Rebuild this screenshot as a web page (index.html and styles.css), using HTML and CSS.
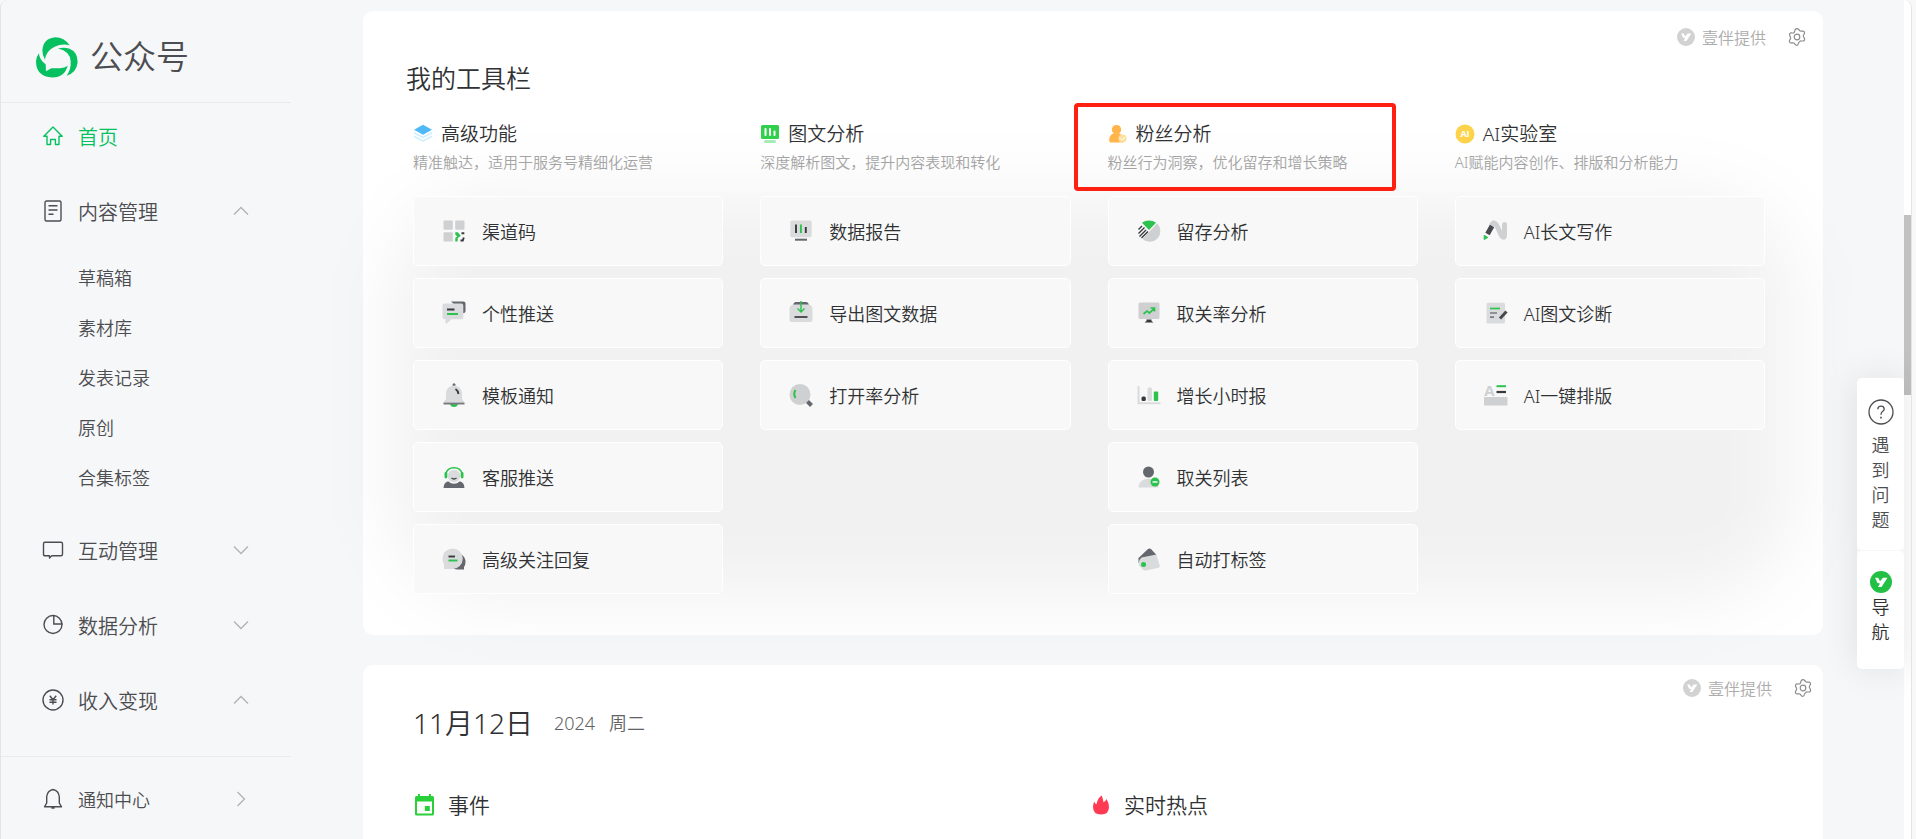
FILE: index.html
```html
<!DOCTYPE html>
<html lang="zh-CN">
<head>
<meta charset="utf-8">
<meta name="viewport" content="width=device-width, initial-scale=1">
<title>公众号</title>
<link rel="stylesheet" href="styles.css">
</head>
<body>
<svg class="sprite" aria-hidden="true">
  <symbol id="chevron" viewBox="0 0 16 16"><path d="M1 4.500l7 7 7-7" fill="none" stroke="#b2b2b2" stroke-width="1.300"/></symbol>
  <symbol id="gear" viewBox="0 0 18 18"><path d="M9 .7q1 0 1.700.8l1.200 1.400q.5.4 1.200.3l1.700-.1q1 0 1.500.9t0 1.800l-.8 1.500q-.4.7 0 1.400l.9 1.600q.5.9 0 1.800t-1.500.9l-1.800-.1q-.7-.1-1.200.4l-1.200 1.400Q10 17.400 9 17.400t-1.700-.8L6.100 15.200q-.5-.5-1.200-.4l-1.800.1q-1 0-1.500-.9t0-1.800l.9-1.600q.4-.7 0-1.400l-.8-1.600q-.5-.9 0-1.800t1.500-.9l1.700.1q.7.1 1.200-.3L7.300 1.500Q8 .7 9 .7z" fill="none" stroke="#8c8c8c" stroke-width="1.200"/><circle cx="9" cy="9" r="2.800" fill="none" stroke="#8c8c8c" stroke-width="1.200"/></symbol>
  <symbol id="yiban" viewBox="0 0 22 22"><circle cx="11" cy="11" r="11" fill="currentColor"/><path d="M5 6.800H8.200L10 10.300L13 6.800H17.500L11.500 16H8L10 12.500L7.500 12z" fill="#fff"/></symbol>
</svg>

<div class="frame">
  <aside class="sidebar">
    <div class="brand">
      <svg width="42" height="41" viewBox="108 113 126 122" fill="#07c160" aria-hidden="true">
        <path d="M135 181Q127 167 127 152Q130 116 166 113Q192 113 209 137Q184 132 164 142Q138 154 135 181z"/>
        <path d="M174 147Q191 142 207 147Q233 157 233 188Q230 218 200 229Q214 208 212 185Q210 155 174 147z"/>
        <path d="M117 161Q117 179 137 194L138 215L154 206H180Q195 206 203 199Q194 234 157 234Q108 231 108 185Q109 171 117 161z"/>
      </svg>
      <span>公众号</span>
    </div>
    <nav class="nav">
      <a class="nav-item active" href="#">
        <svg width="22" height="22" viewBox="0 0 22 22" fill="none" stroke="currentColor" stroke-width="1.400" stroke-linejoin="round"><path d="M11 2L1.800 11.200H5V19.500H8.600V14.500H13.400V19.500H17V11.200H20.200z"/></svg>
        <span>首页</span>
      </a>
      <button class="nav-item" type="button" aria-expanded="true">
        <svg width="22" height="22" viewBox="0 0 22 22" fill="none" stroke="currentColor" stroke-width="1.400"><rect x="3" y="1" width="16" height="20" rx="1.500"/><path d="M6.500 5.800h9M6.500 10h9M6.500 14.200h5"/></svg>
        <span>内容管理</span>
        <svg class="arrow up" width="16" height="16"><use href="#chevron"/></svg>
      </button>
      <ul class="nav-sub">
        <li><a href="#">草稿箱</a></li>
        <li><a href="#">素材库</a></li>
        <li><a href="#">发表记录</a></li>
        <li><a href="#">原创</a></li>
        <li><a href="#">合集标签</a></li>
      </ul>
      <button class="nav-item" type="button">
        <svg width="22" height="22" viewBox="0 0 22 22" fill="none" stroke="currentColor" stroke-width="1.400" stroke-linejoin="round"><path d="M3 3.200H19Q20.500 3.200 20.500 4.700V15.300Q20.500 16.800 19 16.800H9.800L7.500 19V16.800H3Q1.500 16.800 1.500 15.300V4.700Q1.500 3.200 3 3.200z"/></svg>
        <span>互动管理</span>
        <svg class="arrow" width="16" height="16"><use href="#chevron"/></svg>
      </button>
      <button class="nav-item" type="button">
        <svg width="22" height="22" viewBox="0 0 22 22" fill="none" stroke="currentColor" stroke-width="1.400"><circle cx="11" cy="10.500" r="9"/><path d="M11.800 1V10H20.500" /></svg>
        <span>数据分析</span>
        <svg class="arrow" width="16" height="16"><use href="#chevron"/></svg>
      </button>
      <button class="nav-item" type="button">
        <svg width="22" height="22" viewBox="0 0 22 22" fill="none" stroke="currentColor" stroke-width="1.400"><circle cx="11" cy="11" r="10"/><path d="M7.800 6.800l3.200 4 3.200-4M11 10.800v4.800M7.500 10.800h7M7.500 13.300h7"/></svg>
        <span>收入变现</span>
        <svg class="arrow up" width="16" height="16"><use href="#chevron"/></svg>
      </button>
    </nav>
    <a class="nav-item notice" href="#">
      <svg width="22" height="22" viewBox="0 0 22 22" fill="none" stroke="currentColor" stroke-width="1.400" stroke-linejoin="round"><path d="M2.500 18.800L4.700 15V8.500Q5.500 2.500 11 1.500Q16.500 2.500 17.300 8.500V15L19.500 18.800z"/><path d="M9.300 19.700h3.400" stroke-width="2"/></svg>
      <span>通知中心</span>
      <svg class="arrow right" width="16" height="16"><use href="#chevron"/></svg>
    </a>
  </aside>

  <main class="main">
    <section class="panel tools">
      <div class="provider">
        <svg class="badge" width="18" height="18"><use href="#yiban"/></svg>
        <span>壹伴提供</span>
        <button type="button" aria-label="设置"><svg width="18" height="18"><use href="#gear"/></svg></button>
      </div>
      <h2>我的工具栏</h2>
      <div class="groups">
        <section class="group">
          <header>
            <h3><svg width="20" height="20" viewBox="0 0 20 20"><path d="M1 11.500l9 4.500 9-4.500v1.800l-9 4.500-9-4.500zM1 8l9 4.500L19 8v1.800l-9 4.500-9-4.500z" fill="#cdeefd"/><path d="M10 .8l9 5-9 5-9-5z" fill="#4fb9f7"/></svg>高级功能</h3>
            <p>精准触达，适用于服务号精细化运营</p>
          </header>
          <a class="tool" href="#"><svg viewBox="0 0 24 24"><g fill="#cfd0d2"><rect x="1.500" y="1.500" width="9.300" height="9.300" rx="1"/><rect x="13.200" y="1.500" width="9.300" height="9.300" rx="1"/><rect x="1.500" y="13.200" width="9.300" height="9.300" rx="1"/></g><path d="M13.300 13.300h2.500l3 3.400-3 2.300-.2 3.500h-2.300v-3.500l2-1.800-2-1.500z" fill="#2bc24d"/><path d="M19.500 14.300h2.800M18.500 21.500h2.300l1-3" fill="none" stroke="#38393d" stroke-width="1.900"/></svg>渠道码</a>
          <a class="tool" href="#"><svg viewBox="0 0 24 24"><path d="M9 .5h12.500q2 0 2 2V10q0 1.800-2 2.200z" fill="#64676e"/><path d="M2.500 2.500h16.800q2 0 2 2v11.700q0 2-2 2H9.500L5 22.500H3.500V18.200h-1q-2 0-2-2V4.500q0-2 2-2z" fill="#dadbdd"/><path d="M5 8.500h7.500" stroke="#38393d" stroke-width="2"/><path d="M5 13h11" stroke="#2bc24d" stroke-width="2"/></svg>个性推送</a>
          <a class="tool" href="#"><svg viewBox="0 0 24 24"><path d="M8 20.500h8Q15.500 24 12 24T8 20.500z" fill="#2bc24d"/><circle cx="12" cy="1.800" r="1.500" fill="#64676e"/><path d="M1.800 19.200L4 16V10q.5-7 8-7.500 7.500.5 8 7.500v6l2.200 3.200z" fill="#dadbdd"/><path d="M1.500 20.500h21" stroke="#777a80" stroke-width="2"/><path d="M13.500 6Q16 7.500 16.500 11" stroke="#38393d" stroke-width="1.800" fill="none"/></svg>模板通知</a>
          <a class="tool" href="#"><svg viewBox="0 0 24 24"><path d="M1.500 23Q1.500 17 7.500 16h9Q22.500 17 22.500 23z" fill="#64676e"/><circle cx="12" cy="11" r="7" fill="#dadbdd" stroke="#f8f8f8" stroke-width="1.500"/><path d="M4 9Q5 2.800 12 2.800T20 9" fill="none" stroke="#2bc24d" stroke-width="1.400"/><rect x="2.500" y="7" width="2.800" height="6.500" rx="1.400" fill="#2bc24d"/><rect x="18.700" y="7" width="2.800" height="6.500" rx="1.400" fill="#2bc24d"/><path d="M9.500 13Q12 15 14.500 13" fill="none" stroke="#38393d" stroke-width="1.300"/></svg>客服推送</a>
          <a class="tool" href="#"><svg viewBox="0 0 24 24"><path d="M19 7q4.500 3 4.500 8 0 3-1.500 5v2.500h-6q-3 0-5-1.500z" fill="#64676e"/><path d="M10.500 1.500a10 10 0 1 1 0 20.500H2v-5Q.5 15 .5 11.500 1 2.500 10.500 1.500z" fill="#dadbdd"/><path d="M6.500 9.500h6.500" stroke="#38393d" stroke-width="1.900"/><path d="M6.500 13.500h9" stroke="#2bc24d" stroke-width="1.900"/></svg>高级关注回复</a>
        </section>

        <section class="group">
          <header>
            <h3><svg width="20" height="20" viewBox="0 0 20 20"><rect x="4" y="16" width="12" height="3" rx="1.500" fill="#a5ebb2"/><rect x="1" y="1" width="18" height="14" rx="1.500" fill="#31d04c"/><path d="M5.500 5v6M10 5v6M14.500 7.500V11" stroke="#fff" stroke-width="2" stroke-linecap="round"/></svg>图文分析</h3>
            <p>深度解析图文，提升内容表现和转化</p>
          </header>
          <a class="tool" href="#"><svg viewBox="0 0 24 24"><rect x="1.300" y="1.500" width="21.400" height="16.700" rx="1.800" fill="#dadbdd"/><path d="M7 5.500V14M16.800 8v6" stroke="#38393d" stroke-width="1.900"/><path d="M11.900 5.500V14" stroke="#2bc24d" stroke-width="1.900"/><path d="M6 20.700h12" stroke="#64676e" stroke-width="2"/></svg>数据报告</a>
          <a class="tool" href="#"><svg viewBox="0 0 24 24"><path d="M4 4.500Q4.500 1 7 1h10q2.500 0 3 3.500z" fill="#64676e"/><path d="M4 3.500h16q3.500 1 3.500 4V19q0 2-2 2h-19q-2 0-2-2V7.500q0-3 3.500-4z" fill="#dadbdd"/><path d="M12 0v10.500M8.500 7.500L12 11l3.500-3.500" fill="none" stroke="#2bc24d" stroke-width="1.400"/><path d="M5.500 16h13" stroke="#38393d" stroke-width="1.700"/></svg>导出图文数据</a>
          <a class="tool" href="#"><svg viewBox="0 0 24 24"><circle cx="11" cy="11.500" r="10.500" fill="#cfd0d2"/><path d="M18.500 18.500l4 4" stroke="#64676e" stroke-width="4"/><path d="M6.500 7q-2.500 4 0 8" fill="none" stroke="#2bc24d" stroke-width="2"/></svg>打开率分析</a>
        </section>

        <section class="group highlighted">
          <header>
            <h3><svg width="20" height="20" viewBox="0 0 20 20"><path d="M8.500 1a4.500 4.500 0 0 1 2.500 8.300Q16 11 15.500 18.500H3Q1 18.500 1.200 16 1.500 10.500 6 9.300A4.500 4.500 0 0 1 8.500 1z" fill="#ffb54a"/><circle cx="14.500" cy="14.500" r="4" fill="#fddf9f"/><path d="M12.500 14.300l1.600 1.600 2.600-2.600" fill="none" stroke="#fff" stroke-width="1"/></svg>粉丝分析</h3>
            <p>粉丝行为洞察，优化留存和增长策略</p>
          </header>
          <a class="tool" href="#"><svg viewBox="0 0 24 24"><path d="M20 4.500A10.500 10.500 0 0 1 5.500 20z" fill="#cfd0d2"/><path d="M12 11L5 3.800Q8 1.500 12 1.500t7 2.300z" fill="#2bc24d"/><path d="M1.500 10.500L5 7M1.500 14.500L7.500 8.500M2.500 17.500L9 11M4.500 19L11 12.500" stroke="#38393d" stroke-width="1.400"/></svg>留存分析</a>
          <a class="tool" href="#"><svg viewBox="0 0 24 24"><rect x="1.500" y="1.500" width="21" height="16.500" rx="1.500" fill="#cfd0d2"/><path d="M6.500 13l3.500-3 2.500 2 5-5M13.500 7h4v3.500" fill="none" stroke="#2bc24d" stroke-width="1.700"/><path d="M9.500 18.500h5v1.500l2 1.500h-9l2-1.500z" fill="#38393d"/></svg>取关率分析</a>
          <a class="tool" href="#"><svg viewBox="0 0 24 24"><path d="M1.500 3v17.200h22" fill="none" stroke="#dadbdd" stroke-width="2"/><rect x="10.500" y="4.500" width="4.500" height="13.500" rx="1.500" fill="#dadbdd"/><rect x="4.500" y="13.500" width="4.300" height="4.500" rx="1.500" fill="#38393d"/><rect x="16.800" y="8.500" width="4.400" height="9.500" rx="1" fill="#2bc24d"/></svg>增长小时报</a>
          <a class="tool" href="#"><svg viewBox="0 0 24 24"><path d="M1.500 22.500Q2 14 12 13.500q9.500.5 9.500 9z" fill="#dadbdd"/><circle cx="11.500" cy="7" r="5.500" fill="#64676e"/><circle cx="18" cy="17" r="4.500" fill="#2bc24d"/><path d="M15.500 17h5" stroke="#fff" stroke-width="1.400"/></svg>取关列表</a>
          <a class="tool" href="#"><svg viewBox="0 0 24 24"><path d="M1.500 16V11L11 2q1.500-1 3 0l5.500 6z" fill="#64676e"/><path d="M19.300 7.500L22.800 19q.2 1.300-1 1.800L9 23.500q-1.500.3-2.500-.6L2 18.500q-1-5 2.500-8z" fill="#dadbdd"/><circle cx="6.500" cy="17.500" r="2.500" fill="#2bc24d"/></svg>自动打标签</a>
        </section>

        <section class="group">
          <header>
            <h3><svg width="20" height="20" viewBox="0 0 20 20"><circle cx="10" cy="10" r="9.500" fill="#fdd34b"/><text x="10" y="13.200" text-anchor="middle" class="ai-mark">AI</text></svg>AI实验室</h3>
            <p>AI赋能内容创作、排版和分析能力</p>
          </header>
          <a class="tool" href="#"><svg viewBox="0 0 24 24"><path d="M8 5.500Q10 2 12.500 6l5 10.500q2.500 3.500 3 0V5.500" fill="none" stroke="#cfd0d2" stroke-width="5" stroke-linecap="round"/><path d="M8 7L3.500 15" stroke="#48494e" stroke-width="5"/><path d="M.2 16.300l3.600 2.200-3.600 2z" fill="#2bc24d" stroke="#2bc24d"/></svg>AI长文写作</a>
          <a class="tool" href="#"><svg viewBox="0 0 24 24"><rect x="2.500" y="1.800" width="18.500" height="20.700" rx="1.500" fill="#dadbdd"/><path d="M6 7.500h10" stroke="#2bc24d" stroke-width="1.700"/><path d="M6 12h7M6 16.200h4" stroke="#777a80" stroke-width="1.700"/><path d="M16 17.500l6.500-7" stroke="#48494e" stroke-width="3"/></svg>AI图文诊断</a>
          <a class="tool" href="#"><svg viewBox="0 0 24 24"><text x="5.500" y="12.500" text-anchor="middle" class="type-mark">A</text><rect y="14" width="23.500" height="8.500" rx=".8" fill="#cfd0d2"/><path d="M12.500 3.200h9.500" stroke="#2bc24d" stroke-width="2"/><path d="M12.500 9h9.500" stroke="#38393d" stroke-width="2.200"/></svg>AI一键排版</a>
        </section>
      </div>
    </section>

    <section class="panel daily">
      <div class="provider">
        <svg class="badge" width="18" height="18"><use href="#yiban"/></svg>
        <span>壹伴提供</span>
        <button type="button" aria-label="设置"><svg width="18" height="18"><use href="#gear"/></svg></button>
      </div>
      <div class="date"><strong>11月12日</strong><span>2024</span><span>周二</span></div>
      <div class="topics">
        <h3><svg width="24" height="24" viewBox="0 0 24 24"><path d="M2 4.500Q2 3 3.500 3H5V1h2v2h9V1h2v2h1.500Q21 3 21 4.500V21q0 1.500-1.500 1.500h-16Q2 22.500 2 21zM4 8.500v12h15v-12z" fill="#29d03a" fill-rule="evenodd"/><rect x="11.800" y="13" width="5" height="5" fill="#29d03a"/></svg>事件</h3>
        <h3><svg width="24" height="24" viewBox="0 0 24 24"><path d="M12.800 2.500Q14 6 14.500 9.200 16.500 8.500 17.500 6 20 10 20 14q0 7.500-8 7.500T4 14q0-3 1.300-5.500Q6 11 7.500 11.300 8.500 5 12.800 2.500z" fill="#ff3b53"/></svg>实时热点</h3>
      </div>
    </section>
  </main>

  <div class="scrollbar"><div class="thumb"></div></div>
  <div class="float">
    <button class="help" type="button">
      <svg width="26" height="26" viewBox="0 0 26 26" fill="none" stroke="#4c4d50" stroke-width="1.300"><circle cx="13" cy="13" r="12"/><path d="M9.800 10.300Q10 7.200 13 7.200t3.200 2.800Q16.200 11.500 14.500 12.500 13 13.500 13 15.800" /><path d="M13 17.800v1.700" stroke-width="1.600"/></svg>
      <span>遇到问题</span>
    </button>
    <button class="guide" type="button">
      <svg class="badge" width="22" height="22"><use href="#yiban"/></svg>
      <span>导航</span>
    </button>
  </div>
</div>
</body>
</html>
```

FILE: styles.css
```css
* { box-sizing: border-box; }

body {
  margin: 0;
  background: #f8f8f8;
  color: #303133;
  font-family: "Noto Sans", "Noto Sans CJK SC", sans-serif;
  font-size: 18px;
  font-weight: 350;
}

h2, h3, p, ul { margin: 0; padding: 0; font-weight: inherit; }
ul { list-style: none; }
a { color: inherit; text-decoration: none; }
button { margin: 0; padding: 0; border: 0; background: none; color: inherit; font: inherit; cursor: pointer; }
svg { flex: none; display: block; overflow: visible; }
.sprite { position: absolute; width: 0; height: 0; overflow: hidden; }

.frame {
  position: relative;
  display: flex;
  height: 100vh;
  margin: 0 4px 0 0;
  overflow: hidden;
  border: solid #e3e4e6;
  border-width: 0 1px;
  border-radius: 8px 8px 0 0;
  background: #f6f7f9;
}

/* Sidebar */
.sidebar { flex: none; width: 290px; color: #4c4d50; }

.brand {
  display: flex;
  align-items: center;
  gap: 12px;
  height: 103px;
  padding: 12px 0 0 35px;
  border-bottom: 1px solid #e9eaec;
  font-size: 33px;
}
.brand span { line-height: 40px; }

.nav { padding: 8px 0 31px; border-bottom: 1px solid #e9eaec; }

.nav-item {
  display: flex;
  align-items: center;
  gap: 14px;
  width: 100%;
  height: 50px;
  padding: 0 42px 0 41px;
  font-size: 20px;
  text-align: left;
}
.nav-item + .nav-item { margin-top: 25px; }
.nav-sub + .nav-item { margin-top: 22px; }
.nav-item.active { color: #07c160; }
.nav-item.notice { margin-top: 17px; font-size: 18px; }

.arrow { margin-left: auto; }
.arrow.up { transform: rotate(180deg); }
.arrow.right { transform: rotate(-90deg); }

.nav-sub { margin-top: 17px; padding-left: 77px; line-height: 50px; }
.nav-sub a { display: block; }

/* Content */
.main {
  flex: 1;
  min-width: 0;
  display: flex;
  flex-direction: column;
  gap: 30px;
  padding: 11px 81px 0 72px;
}

.panel { position: relative; flex: none; border-radius: 10px; background: #fff; }
.tools { padding: 14px 58px 41px 43px; }
.daily { flex: 1; padding: 11px 58px 0 50px; border-radius: 10px 10px 0 0; }

/* Soft grey haze behind the tool cards, spreading past the panel edge */
.tools::before {
  content: "";
  position: absolute;
  inset: 184px 30px 36px;
  border-radius: 100px;
  background: rgba(0, 0, 0, .053);
  filter: blur(36px);
}
.tools > * { position: relative; }

.provider {
  display: flex;
  align-items: center;
  justify-content: flex-end;
  gap: 7px;
  height: 24px;
  color: #acacac;
  font-size: 16px;
}
.badge { color: #22c045; }
.provider .badge { color: #d2d2d2; }
.provider button { margin-left: 15px; }
.tools .provider { margin-right: -41px; }
.daily .provider { margin-right: -47px; }

.tools h2 { margin-top: 11px; font-size: 25px; line-height: 36px; }

.groups {
  display: grid;
  grid-template-columns: repeat(4, 1fr);
  gap: 37px;
  align-items: start;
  margin-top: 24px;
  padding-left: 7px;
}
.group { display: flex; flex-direction: column; gap: 12px; }
.group header { position: relative; padding-bottom: 8px; }
.group h3 { display: flex; align-items: center; gap: 8px; font-size: 19px; line-height: 28px; }
.group p { color: #a4a4a4; font-size: 15px; line-height: 28px; }
.ai-mark { fill: #fff; font: 700 9px "Open Sans", sans-serif; }
.type-mark { fill: #cfd0d2; font: 700 15px "Open Sans", sans-serif; }

.highlighted header::after {
  content: "";
  position: absolute;
  inset: -17px 22px -7px -34px;
  border: 4px solid #ff2012;
  border-radius: 4px;
}

.tool {
  display: flex;
  align-items: center;
  gap: 16px;
  height: 70px;
  padding: 0 28px;
  border: 1px solid #fff;
  border-radius: 5px;
  background: #f8f8f8;
}
.tool svg { width: 24px; height: 24px; }

.date { display: flex; align-items: center; margin-top: 5px; color: #606266; line-height: 36px; }
.date strong { margin-right: 21px; color: #303133; font-size: 28px; font-weight: inherit; }
.date span + span { margin-left: 14px; }

.topics { display: grid; grid-template-columns: 1fr 1fr; margin-top: 49px; line-height: 30px; }
.topics h3 { display: flex; align-items: center; gap: 11px; font-size: 21px; }

/* Right edge */
.scrollbar { flex: none; width: 7px; padding-top: 215px; background: #fff; }
.thumb { height: 180px; background: #c1c1c1; }

.float {
  position: absolute;
  top: 378px;
  right: 7px;
  width: 47px;
  border-radius: 5px 0 0 5px;
  box-shadow: 0 0 36px rgba(0, 0, 0, .1);
}
.float button {
  display: flex;
  flex-direction: column;
  align-items: center;
  width: 100%;
  border-radius: 5px;
  background: #fff;
}
.float span { width: 18px; line-height: 25px; word-break: break-all; }
.help { gap: 8px; padding: 21px 0 17px; color: #4c4d50; }
.guide { gap: 2px; margin-top: 1px; padding: 20px 0 24px; }
```
